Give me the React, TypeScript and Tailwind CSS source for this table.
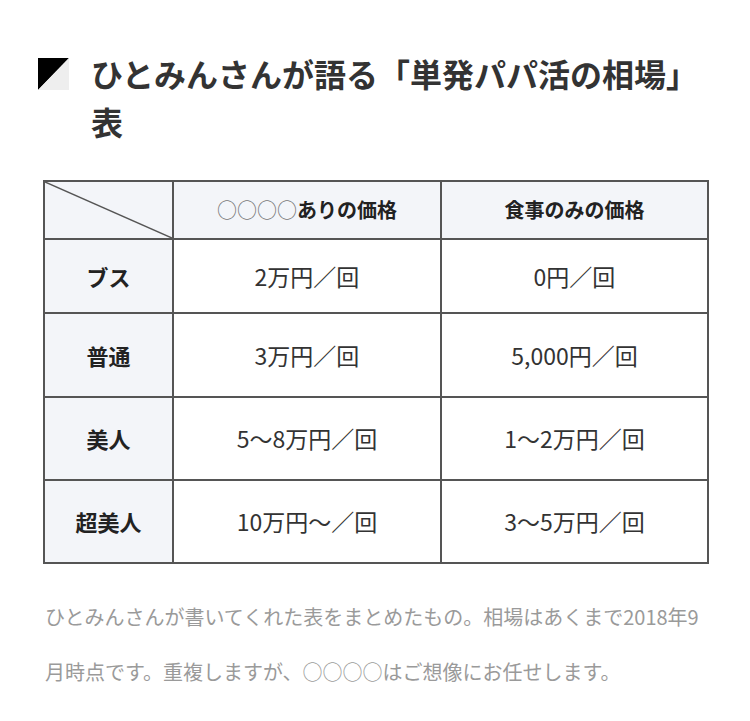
import React from "react";

const rows = [
  ["ブス", "2万円／回", "0円／回"],
  ["普通", "3万円／回", "5,000円／回"],
  ["美人", "5〜8万円／回", "1〜2万円／回"],
  ["超美人", "10万円〜／回", "3〜5万円／回"],
];
const heights = ["h-[74px]", "h-[84px]", "h-[83px]", "h-[83px]"];

export default function App() {
  return (
    <div
      className="w-[750px] h-[721px] bg-white text-[#333]"
      style={{ fontFamily: '"Noto Sans CJK JP", "Noto Sans", sans-serif' }}
    >
      <div className="pl-[38px] pt-[49px] flex items-start">
        <div className="mt-[9px] w-[31px] h-[32px] shrink-0">
          <svg width="31" height="32" viewBox="0 0 31 32">
            <polygon points="0,0 31,0 0,32" fill="#000" />
            <polygon points="31,0 31,32 0,32" fill="#eeeeee" />
          </svg>
        </div>
        <h1 className="ml-[22px] w-[615px] text-[32px] leading-[48px] font-bold">
          ひとみんさんが語る「単発パパ活の相場」表
        </h1>
      </div>

      <div className="pl-[43px] mt-[35px]">
        <table className="w-[664px] border-collapse table-fixed">
          <colgroup>
            <col className="w-[129px]" />
            <col className="w-[268px]" />
            <col className="w-[267px]" />
          </colgroup>
          <thead>
            <tr className="h-[58px]">
              <th className="relative border-2 border-[#555] bg-[#f3f5f9] p-0">
                <svg
                  className="absolute inset-0 w-full h-full"
                  viewBox="0 0 100 100"
                  preserveAspectRatio="none"
                >
                  <line x1="0" y1="0" x2="100" y2="100" stroke="#555" strokeWidth="1.5" vectorEffect="non-scaling-stroke" />
                </svg>
              </th>
              <th className="border-2 border-[#555] bg-[#f3f5f9] text-[20px] font-bold text-[#222]">
                <span className="font-normal text-[#777]">○○○○</span>ありの価格
              </th>
              <th className="border-2 border-[#555] bg-[#f3f5f9] text-[20px] font-bold text-[#222]">
                食事のみの価格
              </th>
            </tr>
          </thead>
          <tbody>
            {rows.map((r, i) => (
              <tr key={i} className={heights[i]}>
                <td className="border-2 border-[#555] bg-[#f3f5f9] text-center text-[22px] font-bold text-[#222]">
                  {r[0]}
                </td>
                <td className="border-2 border-[#555] text-center text-[23px] text-[#333]">
                  {r[1]}
                </td>
                <td className="border-2 border-[#555] text-center text-[23px] text-[#333]">
                  {r[2]}
                </td>
              </tr>
            ))}
          </tbody>
        </table>
      </div>

      <p className="ml-[45px] mt-[25px] w-[680px] text-[20px] leading-[55px] text-[#9a9a9a] whitespace-nowrap">
        ひとみんさんが書いてくれた表をまとめたもの。相場はあくまで2018年9
        <br />
        月時点です。重複しますが、○○○○はご想像にお任せします。
      </p>
    </div>
  );
}
